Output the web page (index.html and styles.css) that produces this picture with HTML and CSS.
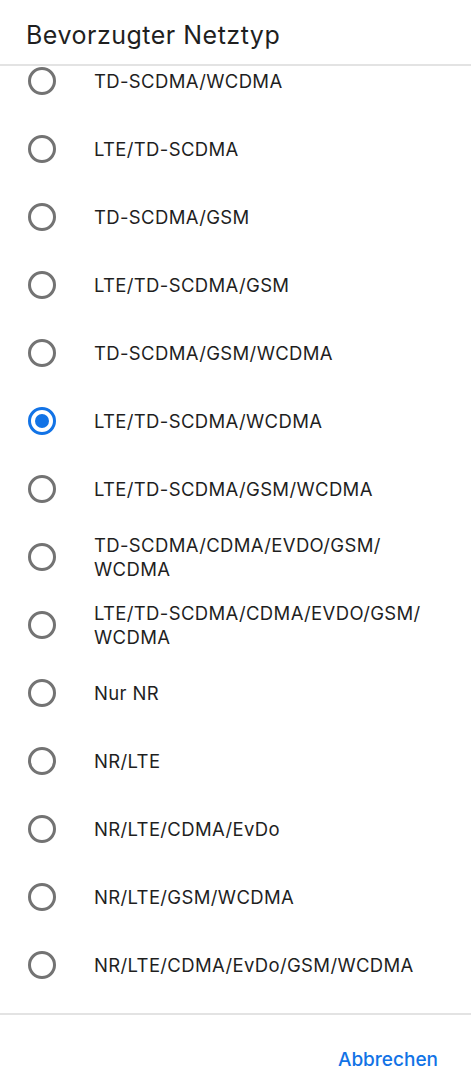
FILE: index.html
```html
<!DOCTYPE html>
<html lang="de">
<head>
    <meta charset="UTF-8">
    <meta name="viewport" content="width=device-width, initial-scale=1.0">
    <title>Bevorzugter Netztyp</title>
    <link rel="stylesheet" href="styles.css">
</head>
<body>
    <div id="dialog">
        <div class="dialog-title">Bevorzugter Netztyp</div>
        <div class="list-wrap">
            <ul class="option-list">
                <li class="option"><span class="radio"></span><span class="label">TD-SCDMA/WCDMA</span></li>
                <li class="option"><span class="radio"></span><span class="label">LTE/TD-SCDMA</span></li>
                <li class="option"><span class="radio"></span><span class="label">TD-SCDMA/GSM</span></li>
                <li class="option"><span class="radio"></span><span class="label">LTE/TD-SCDMA/GSM</span></li>
                <li class="option"><span class="radio"></span><span class="label">TD-SCDMA/GSM/WCDMA</span></li>
                <li class="option checked"><span class="radio"></span><span class="label">LTE/TD-SCDMA/WCDMA</span></li>
                <li class="option"><span class="radio"></span><span class="label">LTE/TD-SCDMA/GSM/WCDMA</span></li>
                <li class="option"><span class="radio"></span><span class="label">TD-SCDMA/CDMA/EVDO/GSM/<br>WCDMA</span></li>
                <li class="option"><span class="radio"></span><span class="label">LTE/TD-SCDMA/CDMA/EVDO/GSM/<br>WCDMA</span></li>
                <li class="option"><span class="radio"></span><span class="label">Nur NR</span></li>
                <li class="option"><span class="radio"></span><span class="label">NR/LTE</span></li>
                <li class="option"><span class="radio"></span><span class="label">NR/LTE/CDMA/EvDo</span></li>
                <li class="option"><span class="radio"></span><span class="label">NR/LTE/GSM/WCDMA</span></li>
                <li class="option"><span class="radio"></span><span class="label">NR/LTE/CDMA/EvDo/GSM/WCDMA</span></li>
            </ul>
        </div>
        <div class="dialog-actions">
            <button type="button">Abbrechen</button>
        </div>
    </div>
</body>
</html>
```

FILE: styles.css
```css
body {
    font-family: Inter, Roboto, sans-serif;
    background-color: #fff;
    color: #1f1f1f;
    margin: 0;
    padding: 0;
}

#dialog {
    width: 471px;
    height: 1080px;
    display: flex;
    flex-direction: column;
}

.dialog-title {
    height: 66px;
    box-sizing: border-box;
    padding: 17px 26px 0;
    font-size: 25px;
    line-height: 36px;
    letter-spacing: 0.5px;
    border-bottom: 2px solid #e3e3e3;
}

.list-wrap {
    height: 947px;
    overflow: hidden;
}

.option-list {
    list-style: none;
    margin: -19px 0 0;
    padding: 0;
}

.option {
    display: flex;
    align-items: center;
    min-height: 68px;
    padding: 0 20px 0 28px;
}

.radio {
    flex: none;
    width: 28px;
    height: 28px;
    box-sizing: border-box;
    border: 3px solid #737373;
    border-radius: 50%;
    margin-right: 38px;
    position: relative;
}

.option.checked .radio {
    border-color: #1273e6;
}

.option.checked .radio::after {
    content: "";
    position: absolute;
    left: 4px;
    top: 4px;
    width: 14px;
    height: 14px;
    border-radius: 50%;
    background-color: #1273e6;
}

.label {
    font-size: 18.5px;
    line-height: 24px;
    letter-spacing: 0.35px;
}

.dialog-actions {
    border-top: 2px solid #e3e3e3;
    flex: 1;
    display: flex;
    justify-content: flex-end;
    align-items: flex-start;
    padding: 0 33px 0 0;
}

button {
    font-family: Inter, Roboto, sans-serif;
    font-size: 19px;
    font-weight: 500;
    color: #1273e6;
    background: none;
    border: none;
    padding: 0;
    margin-top: 33px;
    line-height: 24px;
    cursor: pointer;
}
```
